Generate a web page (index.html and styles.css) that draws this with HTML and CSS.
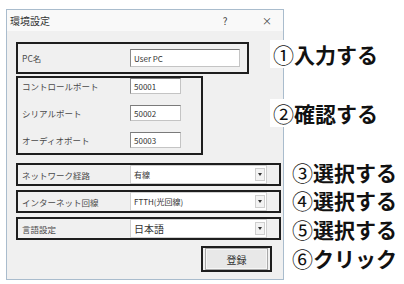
FILE: index.html
```html
<!DOCTYPE html>
<html lang="ja">
<head>
    <meta charset="UTF-8">
    <meta name="viewport" content="width=device-width, initial-scale=1.0">
    <title>環境設定</title>
    <link rel="stylesheet" href="styles.css">
</head>
<body>
    <div class="screen">
        <div class="dialog">
            <div class="titlebar">
                <span class="title">環境設定</span>
                <span class="tb-btn help">?</span>
                <span class="tb-btn close">×</span>
            </div>

            <div class="client">
                <div class="grp grp-pc">
                    <span class="lbl">PC名</span>
                    <span class="field field-wide">User PC</span>
                </div>

                <div class="grp grp-ports">
                    <div class="row">
                        <span class="lbl">コントロールポート</span>
                        <span class="field field-port">50001</span>
                    </div>
                    <div class="row">
                        <span class="lbl">シリアルポート</span>
                        <span class="field field-port">50002</span>
                    </div>
                    <div class="row">
                        <span class="lbl">オーディオポート</span>
                        <span class="field field-port">50003</span>
                    </div>
                </div>

                <div class="grp grp-sel sel-net">
                    <span class="lbl">ネットワーク経路</span>
                    <span class="select"><span class="val">有線</span><span class="drop"></span></span>
                </div>

                <div class="grp grp-sel sel-line">
                    <span class="lbl">インターネット回線</span>
                    <span class="select"><span class="val">FTTH(光回線)</span><span class="drop"></span></span>
                </div>

                <div class="grp grp-sel sel-lang">
                    <span class="lbl">言語設定</span>
                    <span class="select"><span class="val val-lang">日本語</span><span class="drop"></span></span>
                </div>

                <div class="btn-row">
                    <div class="grp grp-btn">
                        <button class="btn">登録</button>
                    </div>
                </div>
            </div>
        </div>

        <!-- callouts drawn over the dialog edge -->
        <div class="note note-1"><span class="num">①</span>入力する</div>
        <div class="note note-2"><span class="num">②</span>確認する</div>
        <div class="note note-3"><span class="num">③</span>選択する</div>
        <div class="note note-4"><span class="num">④</span>選択する</div>
        <div class="note note-5"><span class="num">⑤</span>選択する</div>
        <div class="note note-6"><span class="num">⑥</span>クリック</div>
    </div>
</body>
</html>
```

FILE: styles.css
```css
/* settings dialog with step callouts */
body {
    margin: 0;
    background-color: #fff;
    font-family: "Noto Sans CJK JP", "Noto Sans", sans-serif;
}

.screen {
    position: relative;
    width: 404px;
    height: 284px;
    padding: 9px 0 0 6px;
    box-sizing: border-box;
    overflow: hidden;
}

.dialog {
    width: 278px;
    height: 271px;
    border: 1px solid #a9bccd; /* blue-gray window frame */
    background-color: #f0f0f0;
    box-sizing: border-box;
}

.titlebar {
    height: 21px;
    display: flex;
    align-items: center;
    padding: 0 10px 0 3px;
    background-color: #f9f9f9;
    font-size: 10px;
    color: #333;
}

.title {
    flex: 1;
}

.tb-btn {
    width: 12px;
    text-align: center;
    color: #444;
}

.help {
    margin-right: 30px;
}

.client {
    padding: 11px 0 0 9px;
}

/* black annotation frames */
.grp {
    border: 2px solid #1e1e1e;
    box-sizing: border-box;
    font-size: 8.5px;
    color: #4a4a4a;
}

.lbl {
    width: 108px;
    flex-shrink: 0;
}

.grp-pc {
    width: 233px;
    height: 32px;
    display: flex;
    align-items: center;
    padding-left: 4px;
}

.grp-ports {
    margin-top: 2px;
    width: 187px;
    height: 79px;
    display: flex;
    flex-direction: column;
    gap: 11px;
    padding-left: 4px;
}

.row {
    height: 16px;
    display: flex;
    align-items: center;
}

.field {
    display: flex;
    align-items: center;
    box-sizing: border-box;
    padding-left: 3px;
    background-color: #fff;
    border: 1px solid #c4c4c4;
    border-top-color: #7a7a7a;
    border-left-color: #8a8a8a;
    font-size: 8px;
    color: #333;
}

.field-wide {
    width: 110px;
    height: 18px;
}

.field-port {
    width: 51px;
    height: 16px;
}

.grp-sel {
    width: 265px;
    height: 23px;
    display: flex;
    align-items: center;
    padding-left: 4px;
}

.sel-net {
    margin-top: 8px;
}

.sel-line,
.sel-lang {
    margin-top: 4px;
}

.select {
    width: 137px;
    height: 19px;
    box-sizing: border-box;
    display: flex;
    align-items: center;
    justify-content: space-between;
    padding: 0 1px 0 3px;
    background-color: #fff;
    border: 1px solid #d0d0d0;
}

.val {
    font-size: 8px;
    color: #333;
}

.val-lang {
    font-size: 10px;
}

.drop {
    width: 10px;
    height: 13px;
    box-sizing: border-box;
    display: flex;
    align-items: center;
    justify-content: center;
    border: 1px solid #cfcfcf;
    background-color: #f3f3f3;
}

.drop::after {
    content: "";
    border-left: 2.5px solid transparent;
    border-right: 2.5px solid transparent;
    border-top: 3px solid #333;
}

.btn-row {
    display: flex;
    justify-content: flex-end;
    margin-top: 6px;
    padding-right: 11px;
}

.grp-btn {
    width: 71px;
    height: 26px;
    padding: 0 2px;
    display: flex;
    align-items: center;
}

.btn {
    width: 63px;
    height: 22px;
    background-color: #e8e8e8;
    border: 1px solid #a8a8a8;
    box-shadow: inset 0 0 0 1px #f6f6f6;
    font-family: inherit;
    font-size: 10px;
    color: #333;
    padding: 0;
}

/* callouts */
.note {
    position: absolute;
    padding: 2px 2px 2px 3px;
    background-color: #fff;
    font-size: 21px;
    font-weight: 700;
    line-height: 24px;
    color: #111;
    white-space: nowrap;
}

.num {
    font-weight: 400;
}

.note-1 { left: 270px; top: 40px; }
.note-2 { left: 270px; top: 99px; }
.note-3 { left: 289px; top: 158px; }
.note-4 { left: 289px; top: 186px; }
.note-5 { left: 289px; top: 215px; }
.note-6 { left: 289px; top: 244px; }
```
